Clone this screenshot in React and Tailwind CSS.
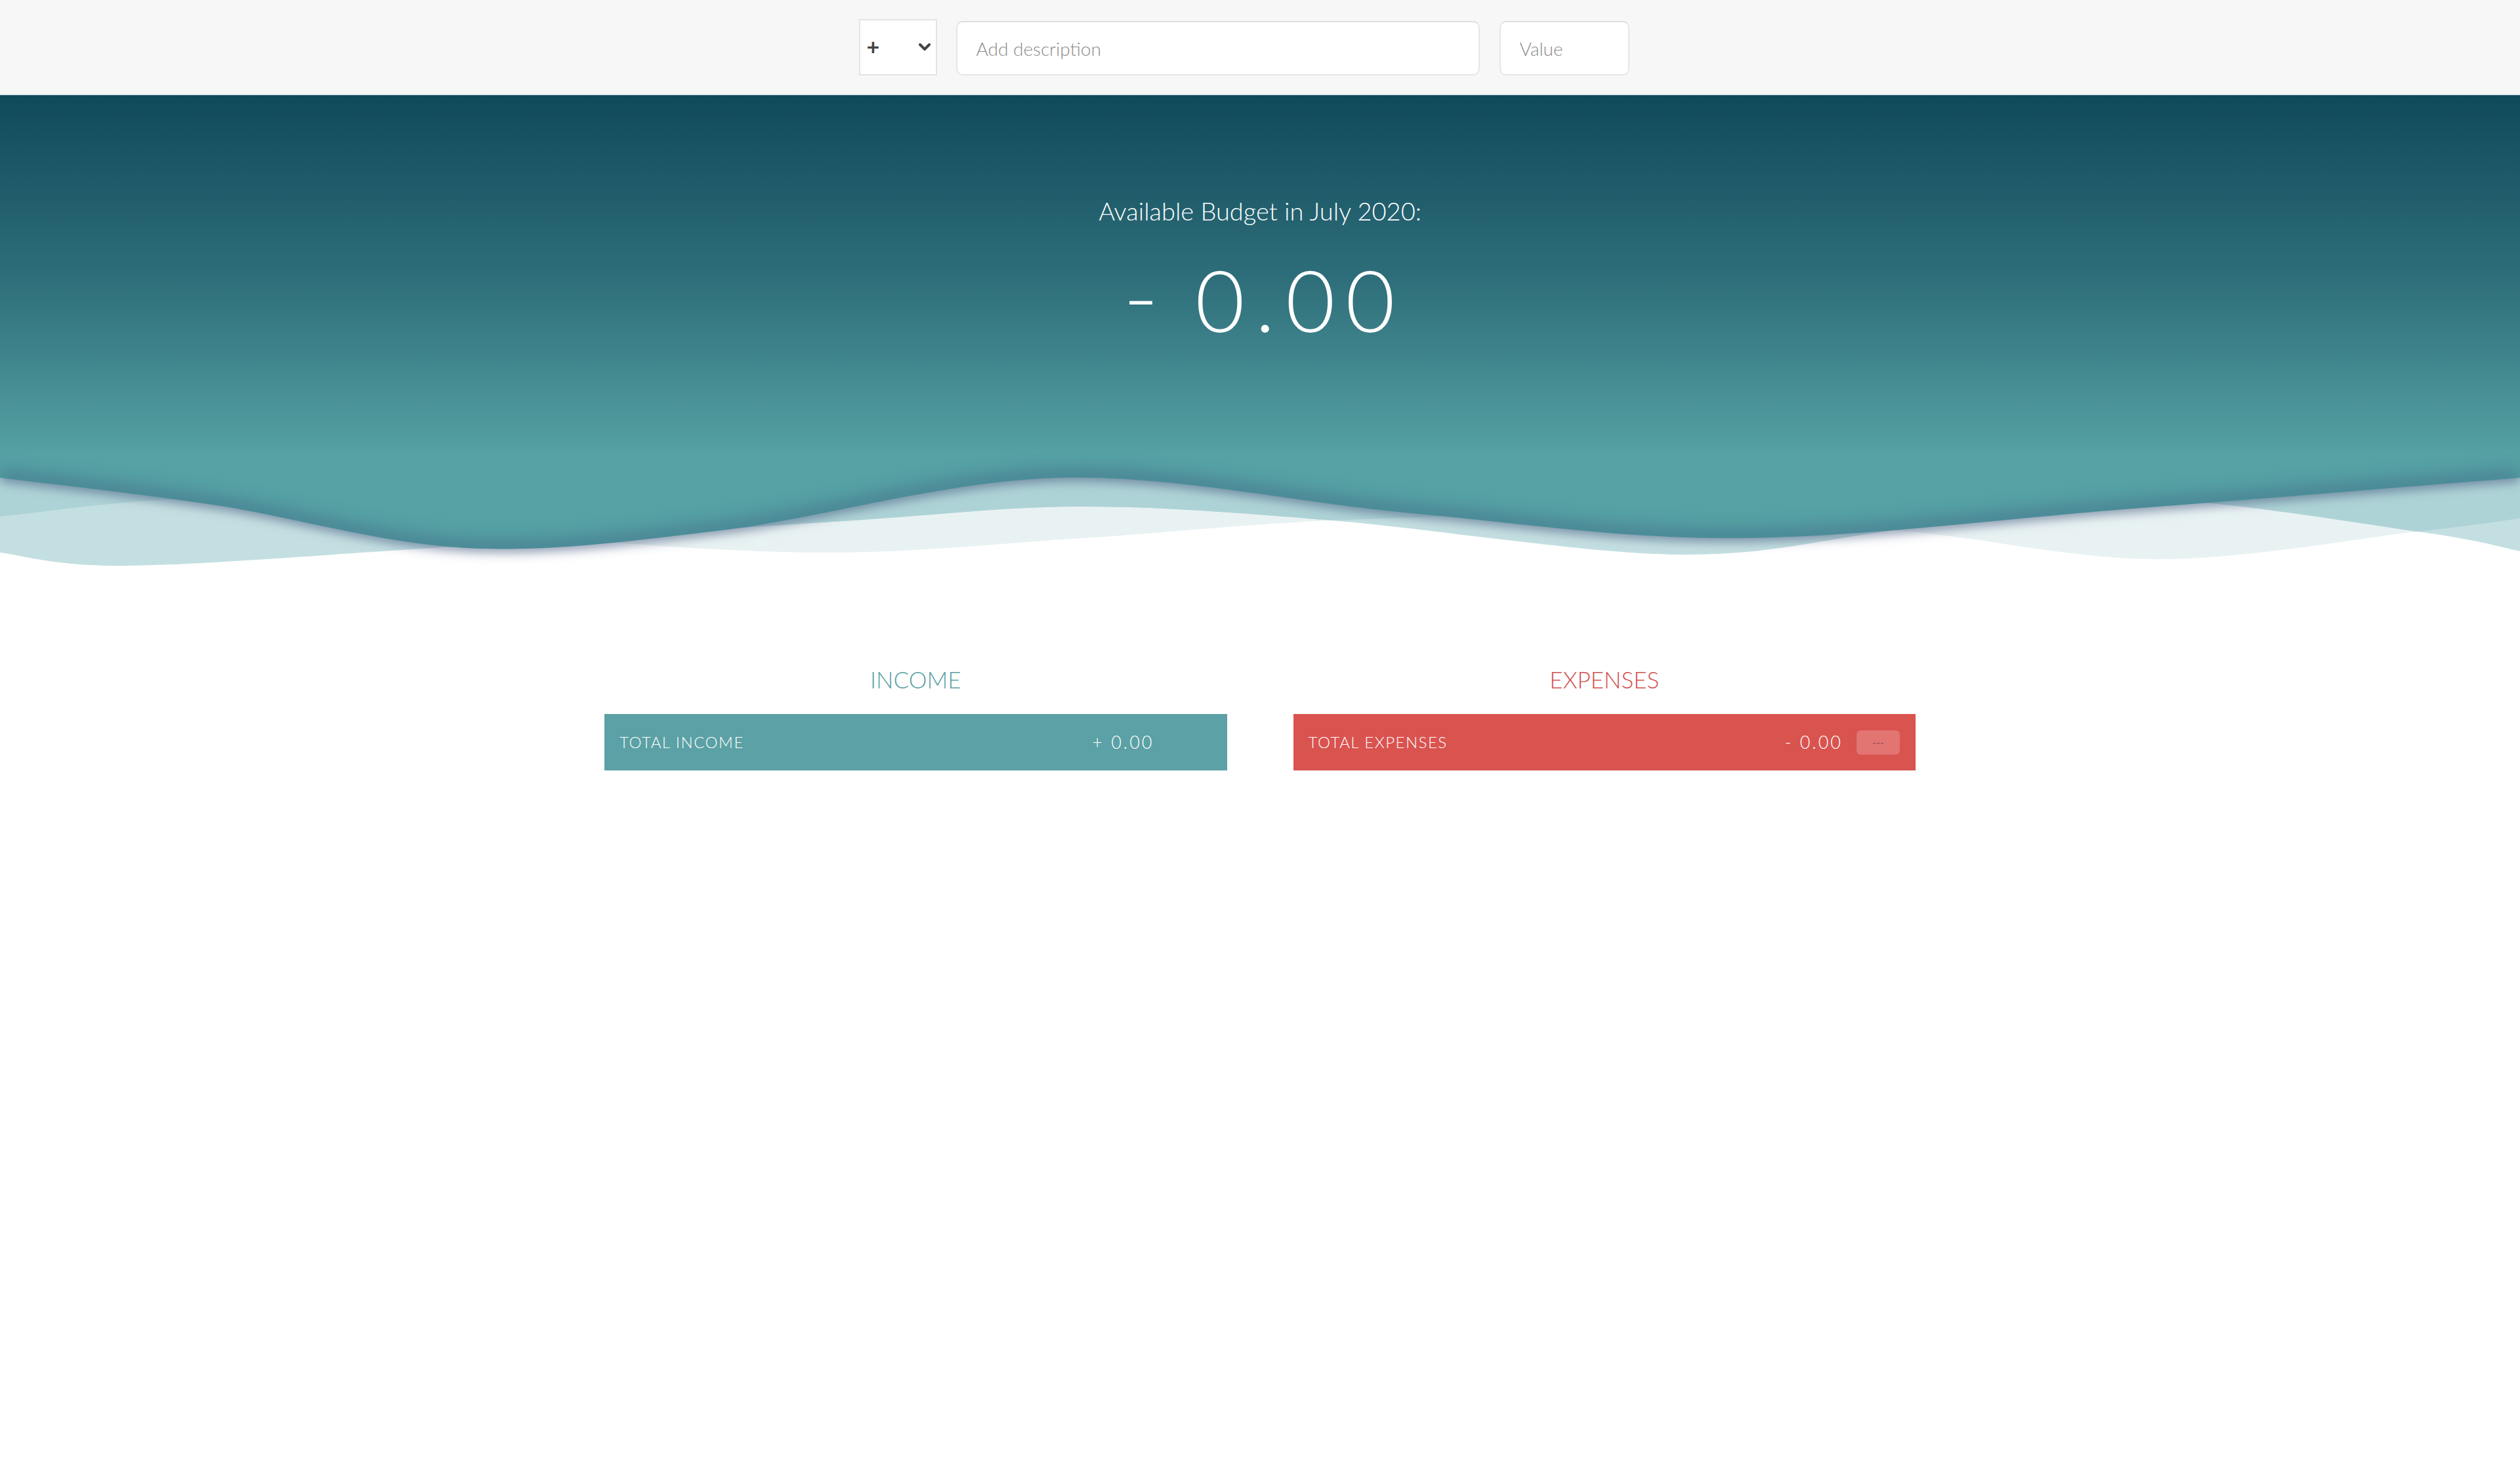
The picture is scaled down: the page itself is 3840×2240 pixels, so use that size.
import React from "react";

// smooth path through points (catmull-rom -> cubic bezier)
const smooth = (pts) => {
    let d = `M${pts[0][0]},${pts[0][1]}`;
    for (let i = 0; i < pts.length - 1; i++) {
        const p0 = pts[i - 1] || pts[i];
        const p1 = pts[i];
        const p2 = pts[i + 1];
        const p3 = pts[i + 2] || p2;
        const c1 = [p1[0] + (p2[0] - p0[0]) / 6, p1[1] + (p2[1] - p0[1]) / 6];
        const c2 = [p2[0] - (p3[0] - p1[0]) / 6, p2[1] - (p3[1] - p1[1]) / 6];
        d += ` C${c1[0]},${c1[1]} ${c2[0]},${c2[1]} ${p2[0]},${p2[1]}`;
    }
    return d;
};

// y values are relative to the top of the wave strip (page y 690)
const tealEdge = [[0, 38], [330, 80], [710, 145], [1100, 118], [1615, 38], [2150, 92], [2650, 130], [3250, 85], [3840, 38]];
const waveP = [[0, 152], [196, 172], [688, 143], [1300, 103], [1650, 82], [2030, 103], [2550, 155], [2888, 118], [3250, 70], [3684, 120], [3840, 150]];
const waveQ = [[0, 97], [350, 70], [800, 125], [1250, 152], [1650, 130], [2030, 103], [2450, 95], [2888, 118], [3286, 162], [3684, 120], [3840, 100]];

const filled = (pts) => `${smooth(pts)} L3840,0 L0,0 Z`;

const Waves = () => (
    <svg className="block w-full h-[190px]" viewBox="0 0 3840 190" preserveAspectRatio="none">
        <defs>
            <clipPath id="clipQ">
                <path d={filled(waveQ)} />
            </clipPath>
            <clipPath id="clipTeal">
                <path d={filled(tealEdge)} />
            </clipPath>
            <filter id="shadow" x="-10%" y="-50%" width="120%" height="200%">
                <feDropShadow dx="0" dy="6" stdDeviation="8" floodColor="#4a5f82" floodOpacity="0.6" />
            </filter>
            <filter id="blur" x="-10%" y="-50%" width="120%" height="200%">
                <feGaussianBlur stdDeviation="12" />
            </filter>
        </defs>
        <path d={filled(waveQ)} fill="#e9f2f3" />
        <path d={filled(waveP)} fill="#c4dfe1" />
        <path d={filled(waveP)} fill="#aed3d6" clipPath="url(#clipQ)" />
        <path d={filled(tealEdge)} fill="#56a2a4" filter="url(#shadow)" />
        <g clipPath="url(#clipTeal)">
            <path d={smooth(tealEdge)} fill="none" stroke="#3f6a88" strokeWidth="30" opacity="0.5" filter="url(#blur)" />
        </g>
    </svg>
);

const ChevronDown = () => (
    <svg width="18" height="12" viewBox="0 0 18 12" fill="none">
        <path d="M2 2 L9 9 L16 2" stroke="#444" strokeWidth="4" strokeLinecap="round" strokeLinejoin="round" />
    </svg>
);

const SummaryRow = ({ label, value, bg, showBtn }) => (
    <div className={`flex items-center h-[86px] pl-[23px] pr-[24px] ${bg}`}>
        <span className="text-white text-[24px] font-light uppercase tracking-[1.5px]">{label}</span>
        <span className="ml-auto text-white text-[27px] font-light tracking-[3px] whitespace-pre">{value}</span>
        <span
            className={`ml-[21px] w-[66px] h-[37px] rounded-[6px] flex items-center justify-center text-[16px] text-[#8a4d4b] ${
                showBtn ? "bg-[#e27472]" : "invisible"
            }`}
        >
            ---
        </span>
    </div>
);

const App = () => {
    return (
        <div className="min-h-screen bg-white font-['Lato',sans-serif]">
            {/* Top input bar */}
            <div className="h-[143px] bg-[#f7f7f7] flex items-center justify-center pr-[49px]">
                <div className="w-[119px] h-[86px] bg-white border-2 border-[#e4e4e4] flex items-center justify-between pl-[10px] pr-[8px]">
                    <span className="text-[34px] font-bold text-[#444] leading-none -mt-[2px]">+</span>
                    <ChevronDown />
                </div>
                <input
                    type="text"
                    placeholder="Add description"
                    className="ml-[29px] w-[798px] h-[83px] mt-[4px] bg-white rounded-[10px] border-2 border-[#e6e6e6] border-t-[#dedede] px-[29px] text-[28px] font-light text-[#555] placeholder:text-[#8a8a8a] outline-none"
                />
                <input
                    type="text"
                    placeholder="Value"
                    className="ml-[30px] w-[198px] h-[83px] mt-[4px] bg-white rounded-[10px] border-2 border-[#e6e6e6] border-t-[#dedede] px-[29px] text-[28px] font-light text-[#555] placeholder:text-[#8a8a8a] outline-none"
                />
            </div>

            {/* Budget header */}
            <div className="h-[547px] bg-gradient-to-b from-[#0f4a5b] via-[#2d6d79] to-[#55a1a3] border-t-2 border-[#dfe9ee] flex flex-col items-center pt-[157px]">
                <div className="text-white text-[38px] font-light leading-none">Available Budget in July 2020:</div>
                <div className="mt-[51px] text-white text-[130px] font-light leading-none flex items-baseline pl-[16px]">
                    <span className="inline-block w-[45px] text-center scale-x-[1.15] -translate-y-[6px]">-</span>
                    <span className="ml-[62px] tracking-[16px]">0.00</span>
                </div>
            </div>
            <Waves />

            {/* Income / Expenses */}
            <div className="w-[1998px] mx-auto mt-[138px] grid grid-cols-2 gap-[101px]">
                <div>
                    <h2 className="text-center text-[35px] font-light leading-none text-[#5aa0a4] uppercase">Income</h2>
                    <div className="mt-[35px]">
                        <SummaryRow label="Total Income" value="+ 0.00" bg="bg-[#5ba1a5]" showBtn={false} />
                    </div>
                </div>
                <div>
                    <h2 className="text-center text-[35px] font-light leading-none text-[#d1504d] uppercase">Expenses</h2>
                    <div className="mt-[35px]">
                        <SummaryRow label="Total Expenses" value="- 0.00" bg="bg-[#d9534f]" showBtn={true} />
                    </div>
                </div>
            </div>
        </div>
    );
};

export default App;
